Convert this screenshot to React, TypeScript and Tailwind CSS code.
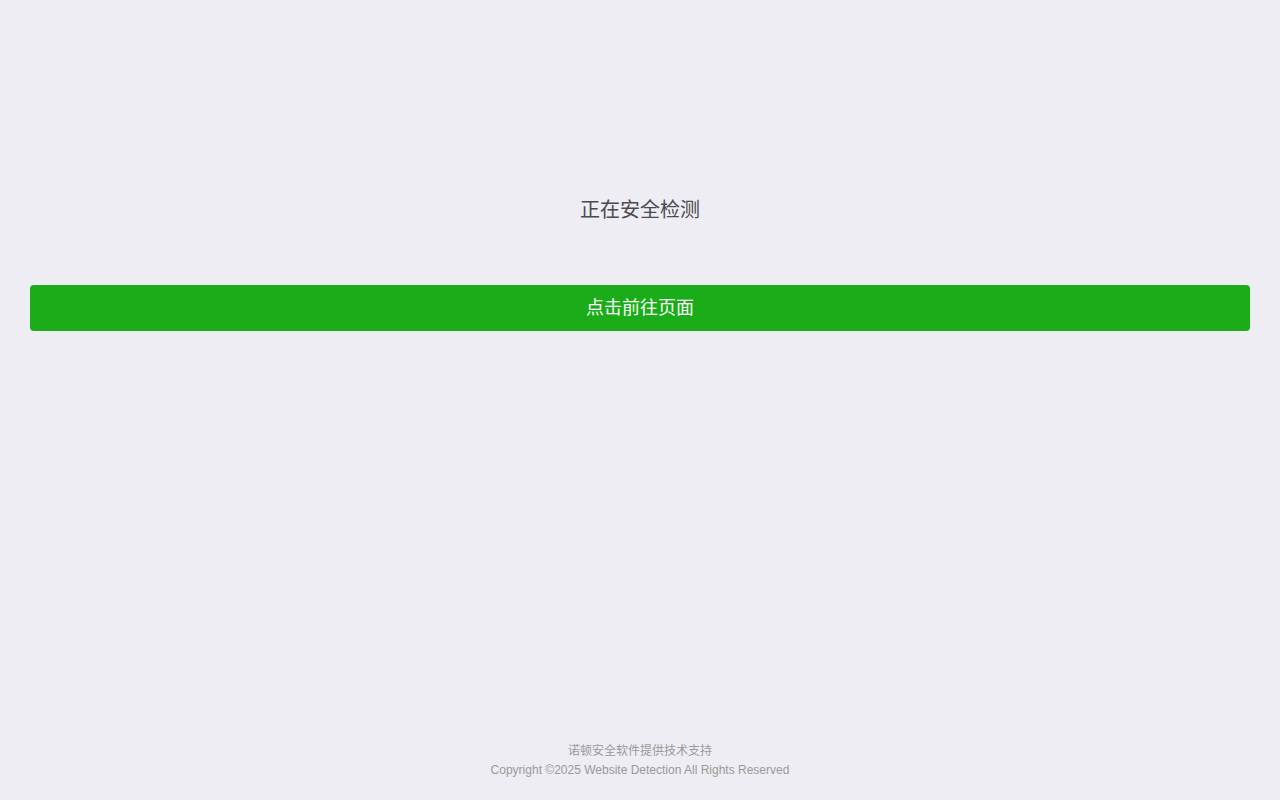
import React from "react";

export default function App() {
  return (
    <div
      className="flex h-[800px] flex-col bg-[#ededf3]"
      style={{ fontFamily: '"Liberation Sans", "Noto Sans CJK SC", sans-serif' }}
    >
      <div className="flex-1">
        <div className="pt-[196px] text-center text-[20px] leading-[28px] text-[#4a4a52]">
          正在安全检测
        </div>
        <div className="mx-[30px] mt-[61px]">
          <button className="flex h-[46px] w-full items-center justify-center rounded-[4px] bg-[#1aad19] text-[18px] text-white">
            点击前往页面
          </button>
        </div>
      </div>
      <div className="pb-[20px] text-center text-[12px] leading-[20px] text-[#999999]">
        <div className="translate-y-[1px]">诺顿安全软件提供技术支持</div>
        <div>Copyright ©2025 Website Detection All Rights Reserved</div>
      </div>
    </div>
  );
}
